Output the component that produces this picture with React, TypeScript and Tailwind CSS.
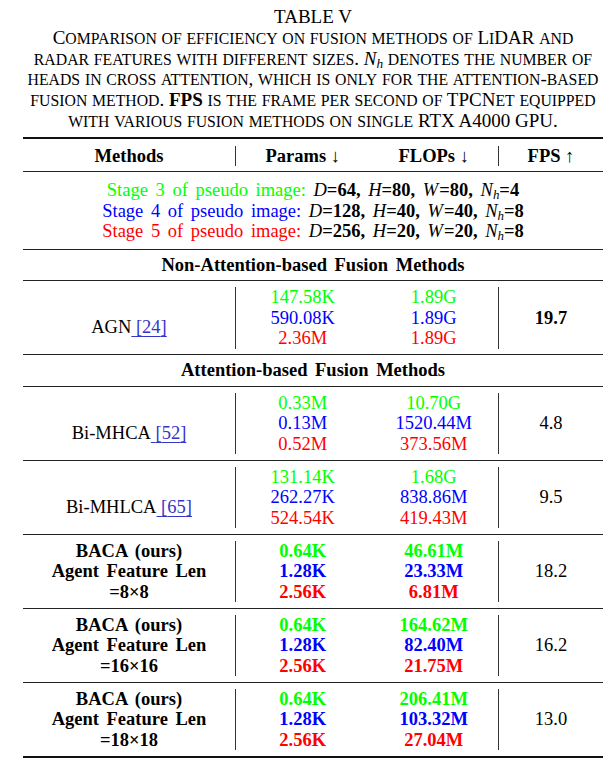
import React from "react"

const G = "text-[#00ff00]"
const B = "text-[#0000ff]"
const R = "text-[#ff0000]"

// methods | params + flops | fps
const cols = "grid grid-cols-[212px_263px_105px]"

type Row = {
  label: React.ReactNode
  baca?: boolean
  params: string[]
  flops: string[]
  fps: string
  fpsBold?: boolean
  last?: boolean
}

// fake small caps: lower case letters become smaller capitals
const SC = ({ t }: { t: string }) => (
  <>
    {t.split(/([a-z]+)/).map((s, i) =>
      i % 2 ? (
        <span key={i} className="text-[0.83em] leading-none">
          {s.toUpperCase()}
        </span>
      ) : (
        s
      )
    )}
  </>
)

const Ref = ({ n }: { n: string }) => (
  <span className="text-[#3434c8] underline decoration-1 underline-offset-[3px]">
    {"\u00a0"}[{n}]
  </span>
)

// subscript kept out of the line box so rows keep their height
const Nh = () => (
  <span className="italic">
    N<span className="relative top-[0.25em] text-[0.7em] leading-none">h</span>
  </span>
)

const Stage = ({ color, n, d, hw, h }: { color: string; n: string; d: string; hw: string; h: string }) => (
  <p className="[word-spacing:3px]">
    <span className={color}>Stage {n} of pseudo image:</span>{" "}
    <span className="italic">D</span>
    <b>={d},</b> <span className="italic">H</span>
    <b>={hw},</b> <span className="italic mr-[1px]">W</span>
    <b>={hw},</b> <Nh />
    <b>={h}</b>
  </p>
)

const Triple = ({ vals, bold }: { vals: string[]; bold?: boolean }) => (
  <div className={bold ? "font-bold" : ""}>
    <p className={G}>{vals[0]}</p>
    <p className={B}>{vals[1]}</p>
    <p className={R}>{vals[2]}</p>
  </div>
)

const DataRow = ({ r }: { r: Row }) => (
  <div
    className={`${cols} ${r.last ? "border-b-2 border-[#111]" : "border-b border-[#222]"} pt-[6px] pb-[5.5px] text-center`}
  >
    <div className={r.baca ? "font-bold [word-spacing:3px]" : "pt-[30px]"}>{r.label}</div>
    <div className="border-l border-[#333] flex">
      <div className="w-[134px]">
        <Triple vals={r.params} bold={r.baca} />
      </div>
      <div className="w-[129px]">
        <Triple vals={r.flops} bold={r.baca} />
      </div>
    </div>
    <div className={`border-l border-[#333] flex items-center justify-center ${r.fpsBold ? "font-bold" : ""}`}>
      {r.fps}
    </div>
  </div>
)

const baca = (n: string) => (
  <div>
    <p>BACA (ours)</p>
    <p>Agent Feature Len</p>
    <p>
      ={n}×{n}
    </p>
  </div>
)

const attn: Row[] = [
  { label: <>Bi-MHCA<Ref n="52" /></>, params: ["0.33M", "0.13M", "0.52M"], flops: ["10.70G", "1520.44M", "373.56M"], fps: "4.8" },
  { label: <>Bi-MHLCA<Ref n="65" /></>, params: ["131.14K", "262.27K", "524.54K"], flops: ["1.68G", "838.86M", "419.43M"], fps: "9.5" },
  { label: baca("8"), baca: true, params: ["0.64K", "1.28K", "2.56K"], flops: ["46.61M", "23.33M", "6.81M"], fps: "18.2" },
  { label: baca("16"), baca: true, params: ["0.64K", "1.28K", "2.56K"], flops: ["164.62M", "82.40M", "21.75M"], fps: "16.2" },
  { label: baca("18"), baca: true, params: ["0.64K", "1.28K", "2.56K"], flops: ["206.41M", "103.32M", "27.04M"], fps: "13.0", last: true },
]

export default function App() {
  return (
    <div className="min-h-[771px] w-[614px] bg-white text-black font-['Liberation_Serif',serif] pt-[7px]">
      {/* caption */}
      <div className="ml-[23px] w-[580px] text-center text-[19px] leading-[20.75px]">
        <p>TABLE V</p>
        <p>
          <SC t="Comparison of efficiency on fusion methods of LiDAR and" />
          <br />
          <SC t="radar features with different sizes. " />
          <Nh />
          <SC t=" denotes the number of" />
          <br />
          <SC t="heads in cross attention, which is only for the attention-based" />
          <br />
          <SC t="fusion method. " />
          <b>FPS</b>
          <SC t=" is the frame per second of TPCNet equipped" />
          <br />
          <SC t="with various fusion methods on single RTX A4000 GPU." />
        </p>
      </div>

      {/* table */}
      <div className="ml-[23px] mt-[5px] w-[580px] border-t-2 border-[#111] text-[18.5px] leading-[20.5px]">
        <div className={`${cols} border-b border-[#222] pt-[7px] pb-[5px] text-center font-bold`}>
          <div>Methods</div>
          <div className="border-l border-[#333] flex">
            <div className="w-[134px]">Params ↓</div>
            <div className="w-[129px]">FLOPs ↓</div>
          </div>
          <div className="border-l border-[#333]">FPS ↑</div>
        </div>

        <div className="border-b border-[#222] pt-[8px] pb-[7px] text-center">
          <Stage color={G} n="3" d="64" hw="80" h="4" />
          <Stage color={B} n="4" d="128" hw="40" h="8" />
          <Stage color={R} n="5" d="256" hw="20" h="8" />
        </div>

        <div className="border-b border-[#222] py-[5px] text-center font-bold [word-spacing:3px]">
          Non-Attention-based Fusion Methods
        </div>

        <DataRow
          r={{ label: <>AGN<Ref n="24" /></>, params: ["147.58K", "590.08K", "2.36M"], flops: ["1.89G", "1.89G", "1.89G"], fps: "19.7", fpsBold: true }}
        />

        <div className="border-b border-[#222] py-[5px] text-center font-bold [word-spacing:3px]">
          Attention-based Fusion Methods
        </div>

        {attn.map((r, i) => (
          <DataRow key={i} r={r} />
        ))}
      </div>
    </div>
  )
}
